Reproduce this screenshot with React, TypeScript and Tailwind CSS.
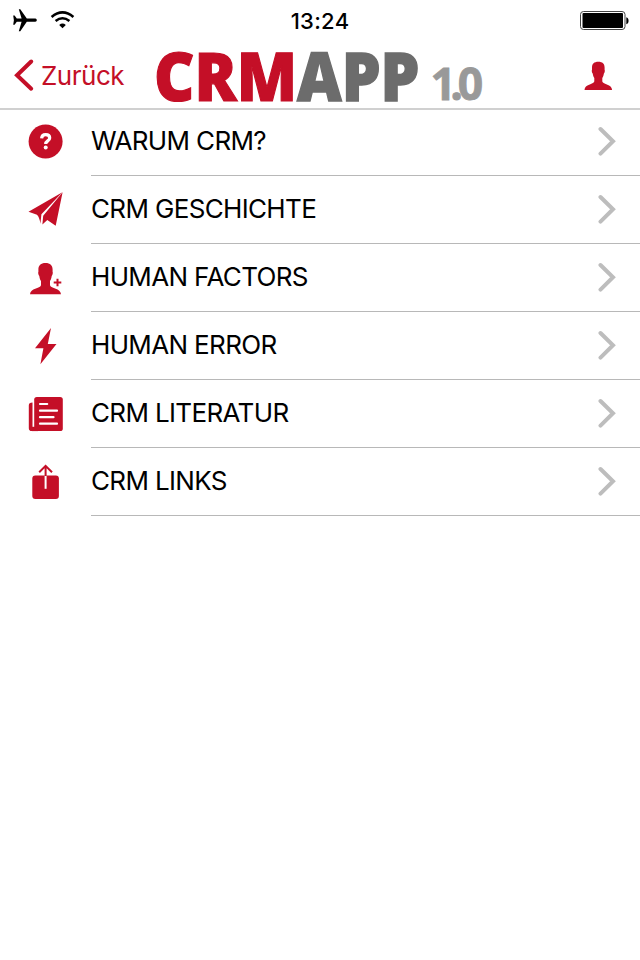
import type { ReactNode } from "react";

const RED = "#c40f27";

function QuestionIcon() {
  return (
    <svg width="60" height="60" viewBox="0 0 60 60" fill={RED}>
      <circle cx="30.6" cy="26.5" r="17" />
      <path
        d="M26.6 23.4c0.2-2.7 1.8-3.8 4.1-3.8c2.4 0 4 1.3 4 3.3c0 3-4 2.9-4 6"
        fill="none"
        stroke="#fff"
        strokeWidth="3.2"
      />
      <circle cx="30.7" cy="32.4" r="2" fill="#fff" />
    </svg>
  );
}

function PlaneIcon() {
  return (
    <svg width="60" height="60" viewBox="0 0 60 60" fill={RED}>
      <path d="M47.4 9.2 13.5 28.8 22 31.8Q24.6 34.5 25.4 40.8L26.4 31.2Z" />
      <path d="M47.6 9.3 28.2 32.8 27.4 41.6 32.3 37 40.7 42.8Z" />
    </svg>
  );
}

function PersonAddIcon() {
  return (
    <svg width="60" height="60" viewBox="0 0 60 60" fill={RED}>
      <path d="M30.5 12C25.8 12 23.4 14.4 23.4 18.5V20.8C22.9 21.6 23.3 24 24.3 25C24.6 27 25 28.6 26 30V34.3C25 37.8 15.4 37 15 43.2H46C45.6 37 36 37.8 35 34.3V30C36 28.6 36.4 27 36.7 25C37.7 24 38.1 21.6 37.6 20.8V18.5C37.6 14.4 35.2 12 30.5 12Z" />
      <path d="M42.5 27.7v7.6M38.7 31.5h7.6" stroke={RED} strokeWidth="2" />
    </svg>
  );
}

function BoltIcon() {
  return (
    <svg width="60" height="60" viewBox="0 0 60 60" fill={RED}>
      <path d="M36 9 20 29.3H28.4L25.4 45.3 41.5 25H32.8Z" />
    </svg>
  );
}

function NewsIcon() {
  return (
    <svg width="60" height="60" viewBox="0 0 60 60" fill={RED}>
      <path d="M17.5 15.5c-2.5 0-3.7 0.8-3.7 3v22.7c0 1.8 1.1 2.9 2.9 2.9h4v-2.5h-3.2z" />
      <rect x="19.2" y="9.9" width="28.6" height="34.2" rx="2.6" />
      <rect x="17" y="39.8" width="6" height="4.3" />
      <path
        d="M25 17h7.2M25 23.7h17M25 30.2h13.5M25 36.7h17"
        stroke="#fff"
        strokeWidth="2.2"
        strokeLinecap="round"
      />
    </svg>
  );
}

function ShareIcon() {
  return (
    <svg width="60" height="60" viewBox="0 0 60 60" fill={RED}>
      <rect x="17.3" y="20.5" width="26.6" height="23.5" rx="3" />
      <path d="M30.6 20.5v13.3" stroke="#fff" strokeWidth="2" />
      <path d="M30.6 21V11M24.2 17.2 30.6 10.8 37 17.2" fill="none" stroke={RED} strokeWidth="2" />
    </svg>
  );
}

const ITEMS: { label: string; icon: ReactNode }[] = [
  { label: "WARUM CRM?", icon: <QuestionIcon /> },
  { label: "CRM GESCHICHTE", icon: <PlaneIcon /> },
  { label: "HUMAN FACTORS", icon: <PersonAddIcon /> },
  { label: "HUMAN ERROR", icon: <BoltIcon /> },
  { label: "CRM LITERATUR", icon: <NewsIcon /> },
  { label: "CRM LINKS", icon: <ShareIcon /> },
];

function StatusBar() {
  return (
    <div className="flex h-10 items-center justify-between pr-[10px] pl-3">
      <div className="flex w-[118px] items-center">
        <svg width="26" height="40" viewBox="12 0 26 40">
          <path d="M36.8 20.2c0-1.2-1.2-1.6-2.6-1.6h-7.4L20.3 9.2h-1.5l2.8 9.4h-4.8L14.6 15.6H13.2l0.7 4.6l-0.7 4.6h1.4l2.2-3h4.8l-2.8 9.4h1.5l6.5-9.4h7.4c1.4 0 2.6-0.4 2.6-1.6z" />
        </svg>
        <svg width="26" height="40" viewBox="50 0 26 40" className="ml-3" fill="none">
          <path d="M51.6 16.9Q62.5 8 73.4 16.9" stroke="#000" strokeWidth="2.6" />
          <path d="M55.6 21Q62.5 15.4 69.4 21" stroke="#000" strokeWidth="2.5" />
          <path d="M59.2 25Q62.5 22.2 65.8 25L62.5 28.3Z" fill="#000" />
        </svg>
      </div>
      <div className="pt-0.5 text-[22px] leading-[26px] font-medium tracking-[0.3px]">13:24</div>
      <div className="flex w-[120px] justify-end">
        <svg width="52" height="40" viewBox="578 0 52 40">
          <rect x="580.5" y="11.5" width="44.5" height="18" rx="3" fill="#fff" stroke="#444" />
          <rect x="582.5" y="13" width="40.5" height="15" rx="1" />
          <path d="M626.3 17.3c3 0.7 3 6.3 0 7z" />
        </svg>
      </div>
    </div>
  );
}

function Logo() {
  return (
    <svg width="340" height="60" viewBox="150 46 340 60" className="ml-[26px] overflow-visible">
      <g fontFamily="'Open Sans', sans-serif" fontWeight="800">
        <text
          x="154"
          y="100.5"
          fontSize="67"
          textLength="143"
          lengthAdjust="spacingAndGlyphs"
          fill="#c40f27"
          stroke="#c40f27"
          strokeWidth="1.2"
        >
          CRM
        </text>
        <text
          x="297"
          y="100.5"
          fontSize="67"
          textLength="122.5"
          lengthAdjust="spacingAndGlyphs"
          fill="#6c6c6c"
          stroke="#6c6c6c"
          strokeWidth="1.4"
        >
          APP
        </text>
        <text
          x="430.5 450.2 457.8"
          y="100.3"
          fontSize="44.5"
          fontWeight="700"
          fill="#999"
          stroke="#999"
          strokeWidth="0.8"
        >
          1.0
        </text>
      </g>
    </svg>
  );
}

function NavBar() {
  return (
    <header className="flex h-[70px] items-start border-b-2 border-[#d0d0d0] pt-[6px]">
      <button className="flex h-[60px] w-[124px] items-center pl-[14px] text-[#c40f27]">
        <svg width="27" height="60" viewBox="14 46 27 60" fill="none" className="shrink-0">
          <path d="M31.2 61.5 17 75.3 31.2 88.7" stroke={RED} strokeWidth="4" strokeLinecap="round" />
        </svg>
        <span className="text-[26px] leading-8 tracking-[-0.5px]">Zurück</span>
      </button>
      <Logo />
      <svg width="40" height="60" viewBox="578 46 40 60" className="ml-[88px]" fill={RED}>
        <path d="M598.3 61.7C594.1 61.7 592 63.8 592 67.5V69.7C591.5 70.4 591.8 72.6 592.7 73.4C593 75.2 593.4 76.6 594.3 77.9V81.6C593.4 84.8 584.8 84.2 584.5 90H612.1C611.8 84.2 603.2 84.8 602.3 81.6V77.9C603.2 76.6 603.6 75.2 603.9 73.4C604.8 72.6 605.1 70.4 604.6 69.7V67.5C604.6 63.8 602.5 61.7 598.3 61.7Z" />
      </svg>
    </header>
  );
}

export default function App() {
  return (
    <div className="min-h-screen w-[640px] overflow-hidden bg-white font-['Inter',sans-serif] text-black">
      <StatusBar />
      <NavBar />
      <ul className="-mt-0.5">
        {ITEMS.map((item) => (
          <li key={item.label} className="flex h-[68px] pl-[15px]">
            <div className="w-[76px] pt-[7px]">{item.icon}</div>
            <div className="flex flex-1 items-center justify-between border-b border-[#b8b8b8] pr-[23px] pb-px">
              <span className="text-[26px] leading-8 tracking-[-0.65px]">{item.label}</span>
              <svg width="20" height="30" viewBox="0 0 20 30" fill="none">
                <path d="M3.5 3 16 15.3 3.5 27.6" stroke="#bdbdbd" strokeWidth="4" strokeLinecap="round" />
              </svg>
            </div>
          </li>
        ))}
      </ul>
    </div>
  );
}
